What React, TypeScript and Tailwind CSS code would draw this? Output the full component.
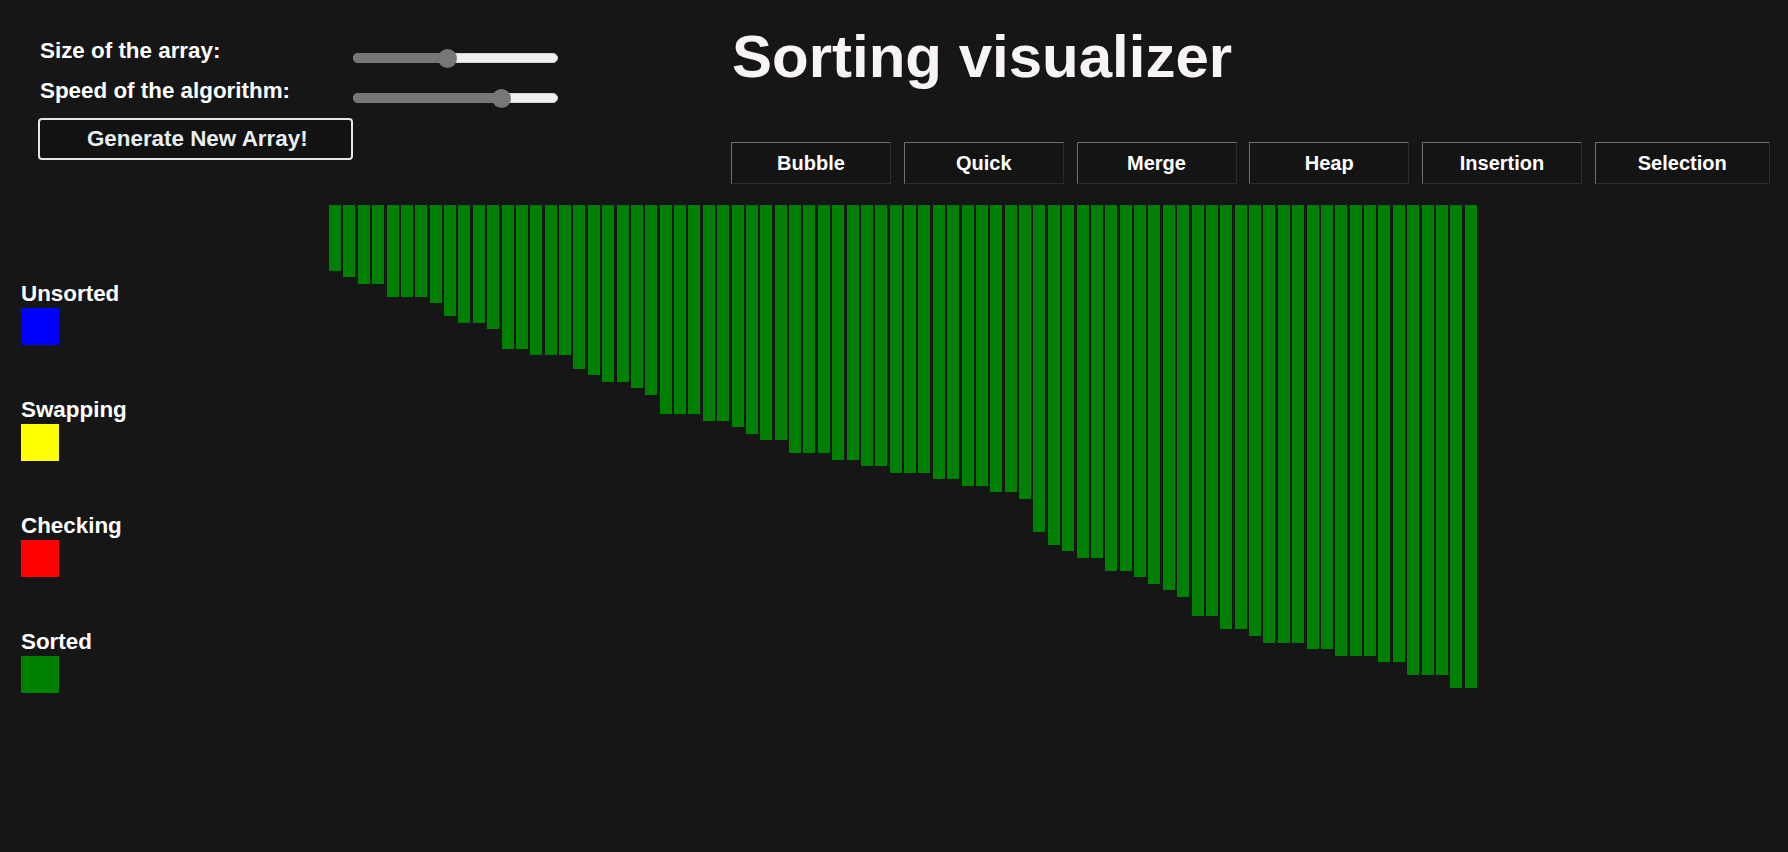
import { useState } from 'react';

const barHeights = [
  66, 72, 79, 79, 92, 92, 92, 98, 111, 118,
  118, 124, 144, 144, 150, 150, 150, 164, 170, 177,
  177, 183, 190, 209, 209, 209, 216, 216, 222, 229,
  235, 235, 248, 248, 248, 255, 255, 261, 261, 268,
  268, 268, 274, 274, 281, 281, 287, 287, 294, 327,
  340, 346, 353, 353, 366, 366, 372, 379, 385, 392,
  411, 411, 424, 424, 431, 438, 438, 438, 444, 444,
  451, 451, 451, 457, 457, 470, 470, 470, 483, 483,
];

const algorithms = ['Bubble', 'Quick', 'Merge', 'Heap', 'Insertion', 'Selection'];

const legend = [
  { label: 'Unsorted', color: 'bg-[#0000ff]' },
  { label: 'Swapping', color: 'bg-[#ffff00]' },
  { label: 'Checking', color: 'bg-[#ff0000]' },
  { label: 'Sorted', color: 'bg-[#008000]' },
];

// 205px track, 19px thumb
const Slider = ({ value }: { value: number }) => {
  const center = 9.5 + (value / 100) * 186;
  return (
    <div className="relative w-[205px] h-[10px] rounded-full bg-[#efefef] border border-[#d4d4d4]">
      <div
        className="absolute left-[-1px] top-[-1px] h-[10px] rounded-full bg-[#777777]"
        style={{ width: center }}
      />
      <div
        className="absolute top-[-5.5px] w-[19px] h-[19px] rounded-full bg-[#777777]"
        style={{ left: center - 10.5 }}
      />
    </div>
  );
};

const App = () => {
  const [size] = useState(46);
  const [speed] = useState(75);

  return (
    <div className="w-full h-[852px] overflow-hidden bg-[#161616] text-white font-['Liberation_Sans',Arial,sans-serif] font-bold">
      <div className="flex">
        <div className="w-[731px] pl-[38px] pt-[37.5px]">
          <div className="grid grid-cols-[314.5px_205px]">
            <div className="h-[40px] pl-[2px] text-[22.4px] leading-[26px]">Size of the array:</div>
            <div className="h-[40px] pt-[15.5px]">
              <Slider value={size} />
            </div>
            <div className="h-[40px] pl-[2px] text-[22.4px] leading-[26px]">Speed of the algorithm:</div>
            <div className="h-[40px] pt-[15.5px]">
              <Slider value={speed} />
            </div>
          </div>
          <button className="w-[314.5px] h-[42px] rounded-[4px] border-2 border-[#e6e6e6] bg-[#121212] text-[#e9eef0] text-[22.4px] leading-[26px] font-bold pl-[4px]">
            Generate New Array!
          </button>
        </div>
        <div className="flex flex-col pt-[21.5px]">
          <h1 className="text-[60px] leading-[70px] font-bold text-[#f9f4f4] pl-[1px]">Sorting visualizer</h1>
          <div className="flex gap-[12.75px] mt-[50.5px]">
            {algorithms.map((name) => (
              <button
                key={name}
                className={
                  (name === 'Selection' ? 'w-[175px] ' : 'w-[160px] ') +
                  'h-[42.3px] border border-t-[#6f6f6f] border-l-[#6f6f6f] border-b-[#2c2c2c] border-r-[#2c2c2c] bg-[#141414] text-white text-[20px] leading-[24px] font-bold'
                }
              >
                {name}
              </button>
            ))}
          </div>
        </div>
      </div>

      <div className="flex">
        <div className="w-[329px] shrink-0 pl-[21px] pt-[97px] flex flex-col gap-[51.8px]">
          {legend.map((item) => (
            <div key={item.label} className="flex flex-col">
              <span className="text-[22.4px] leading-[26px]">{item.label}</span>
              <div className={'w-[37.5px] h-[37.5px] mt-[0.7px] ' + item.color} />
            </div>
          ))}
        </div>
        <div className="flex items-start gap-[2.38px] pt-[20.7px]">
          {barHeights.map((h, i) => (
            <div key={i} className="w-[12px] shrink-0 bg-[#008000]" style={{ height: h }} />
          ))}
        </div>
      </div>
    </div>
  );
};

export default App;
